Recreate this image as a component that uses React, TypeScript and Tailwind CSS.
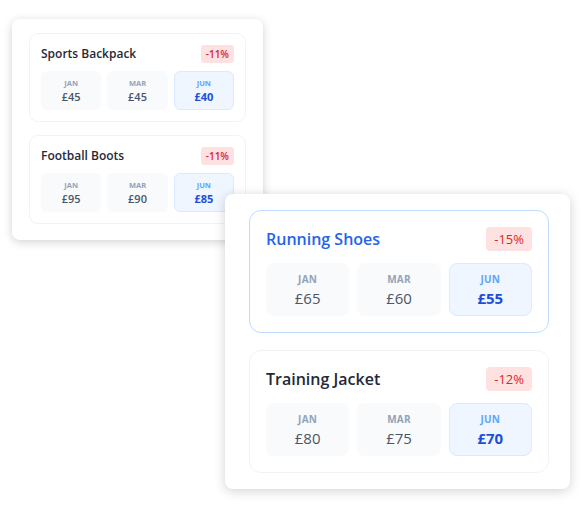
type Row = { name: string; off: string; prices: [string, string, string]; active?: boolean }

const back: Row[] = [
  { name: 'Sports Backpack', off: '-11%', prices: ['£45', '£45', '£40'] },
  { name: 'Football Boots', off: '-11%', prices: ['£95', '£90', '£85'] },
]

const front: Row[] = [
  { name: 'Running Shoes', off: '-15%', prices: ['£65', '£60', '£55'], active: true },
  { name: 'Training Jacket', off: '-12%', prices: ['£80', '£75', '£70'] },
]

const months = ['JAN', 'MAR', 'JUN']

function SmallItem({ row }: { row: Row }) {
  return (
    <div className="rounded-[9px] border border-[#f1f3f6] px-[11px] pt-[11px] pb-[11px]">
      <div className="flex items-center justify-between">
        <span className="text-[12px] font-semibold text-[#1f2937]">{row.name}</span>
        <span className="rounded-[3px] bg-[#fee2e2] px-[5px] text-[10px] leading-[18px] font-semibold text-[#dc2626]">
          {row.off}
        </span>
      </div>
      <div className="mt-[8px] grid grid-cols-3 gap-[6px]">
        {row.prices.map((p, i) => {
          const last = i === 2
          return (
            <div
              key={i}
              className={
                last
                  ? 'flex h-[39px] flex-col items-center justify-center rounded-[6px] border border-[#dbeafe] bg-[#eff6ff]'
                  : 'flex h-[39px] flex-col items-center justify-center rounded-[6px] bg-[#f8fafc]'
              }
            >
              <span
                className={
                  last
                    ? 'text-[7.5px] leading-[10px] font-bold text-[#60a5fa]'
                    : 'text-[7.5px] leading-[10px] font-bold text-[#94a3b8]'
                }
              >
                {months[i]}
              </span>
              <span
                className={
                  last
                    ? 'mt-[1px] text-[11px] leading-[15px] font-bold text-[#1d4ed8]'
                    : 'mt-[1px] text-[11px] leading-[15px] font-semibold text-[#4b5563]'
                }
              >
                {p}
              </span>
            </div>
          )
        })}
      </div>
    </div>
  )
}

function BigItem({ row }: { row: Row }) {
  return (
    <div
      className={
        row.active
          ? 'rounded-xl border border-[#bfdbfe] px-4 pt-4 pb-4'
          : 'rounded-xl border border-[#f1f3f6] px-4 pt-4 pb-4'
      }
    >
      <div className="flex items-center justify-between">
        <span
          className={
            row.active
              ? 'text-[16px] font-semibold text-[#2563eb]'
              : 'text-[16px] font-semibold text-[#1f2937]'
          }
        >
          {row.name}
        </span>
        <span className="rounded-[4px] bg-[#fee2e2] px-2 text-[13px] leading-[24px] font-medium text-[#dc2626]">
          {row.off}
        </span>
      </div>
      <div className="mt-3 grid grid-cols-3 gap-2">
        {row.prices.map((p, i) => {
          const last = i === 2
          return (
            <div
              key={i}
              className={
                last
                  ? 'flex h-[53px] flex-col items-center justify-center rounded-lg border border-[#dbeafe] bg-[#eff6ff]'
                  : 'flex h-[53px] flex-col items-center justify-center rounded-lg bg-[#f8fafc]'
              }
            >
              <span
                className={
                  last
                    ? 'text-[10px] leading-[14px] font-bold tracking-wide text-[#60a5fa]'
                    : 'text-[10px] leading-[14px] font-bold tracking-wide text-[#94a3b8]'
                }
              >
                {months[i]}
              </span>
              <span
                className={
                  last
                    ? 'mt-[3px] text-[15px] leading-[19px] font-bold text-[#1d4ed8]'
                    : 'mt-[3px] text-[15px] leading-[19px] font-medium text-[#4b5563]'
                }
              >
                {p}
              </span>
            </div>
          )
        })}
      </div>
    </div>
  )
}

export default function App() {
  return (
    <div
      className="relative h-[505px] w-[585px] overflow-hidden bg-white"
      style={{ fontFamily: '"Segoe UI", "Open Sans", sans-serif' }}
    >
      <div className="absolute top-[19px] left-[12px] flex w-[251px] flex-col gap-[13px] rounded-lg bg-white px-[17px] pt-[14px] pb-[16px] shadow-[0_2px_10px_rgba(0,0,0,0.18)]">
        {back.map((r) => (
          <SmallItem key={r.name} row={r} />
        ))}
      </div>
      <div className="absolute top-[194px] left-[225px] flex w-[345px] flex-col gap-[17px] rounded-lg bg-white pt-4 pr-[21px] pb-4 pl-[24px] shadow-[0_2px_12px_rgba(0,0,0,0.18)]">
        {front.map((r) => (
          <BigItem key={r.name} row={r} />
        ))}
      </div>
    </div>
  )
}
